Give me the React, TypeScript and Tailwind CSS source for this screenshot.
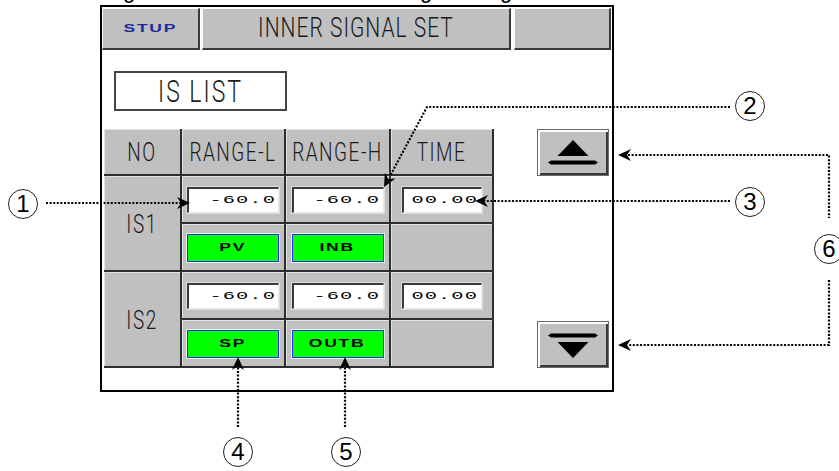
import React from "react";

type Pt = [number, number];

function arrowHead(tip: Pt, from: Pt): string {
  const dx = tip[0] - from[0];
  const dy = tip[1] - from[1];
  const len = Math.hypot(dx, dy);
  const ux = dx / len;
  const uy = dy / len;
  const px = -uy;
  const py = ux;
  const L = 13;
  const W = 6;
  const N = 9;
  const bx = tip[0] - ux * L;
  const by = tip[1] - uy * L;
  const nx = tip[0] - ux * N;
  const ny = tip[1] - uy * N;
  return `M${tip[0]} ${tip[1]} L${bx + px * W} ${by + py * W} L${nx} ${ny} L${bx - px * W} ${by - py * W} Z`;
}

function Label({ children }: { children: React.ReactNode }) {
  return (
    <span className="inline-block scale-y-[1.35] font-['Roboto','Liberation_Sans',sans-serif] font-light text-[19px] leading-none tracking-[1.5px] text-[#1a1a1a]">
      {children}
    </span>
  );
}

function NumBox({ value, w }: { value: string; w: string }) {
  return (
    <div
      className={`${w} h-[26px] bg-white border-t-2 border-l-2 border-t-[#3a3a3a] border-l-[#3a3a3a] border-r border-b border-r-[#e6e6e6] border-b-[#e6e6e6] shadow-[0_0_0_1px_#dedede] flex items-center justify-end pr-[2px]`}
    >
      <span className="inline-block origin-right scale-x-[1.85] font-['Liberation_Mono',monospace] text-[11px] leading-none tracking-[0.6px] text-black">
        {value}
      </span>
    </div>
  );
}

function GreenBtn({ label }: { label: string }) {
  return (
    <div className="w-[92px] h-[28px] bg-[#00ff00] border-[1.5px] border-[#2b2bff] shadow-[0_0_0_1px_#eeeeee] flex items-center justify-center">
      <span className="inline-block scale-x-[1.75] text-[10px] font-bold leading-none tracking-[1px] text-black">
        {label}
      </span>
    </div>
  );
}

const cell = "bg-[#c0c0c0] shadow-[inset_1px_1px_0_#e2e2e2] flex items-center justify-center pt-[2px]";

function Callout({ n, cls }: { n: string; cls: string }) {
  return (
    <div
      className={`absolute ${cls} w-[30px] h-[30px] rounded-full border border-[#222] flex items-center justify-center text-[24px] leading-none text-black`}
    >
      {n}
    </div>
  );
}

export default function App() {
  const dot = { stroke: "#000", strokeWidth: 2.2, strokeDasharray: "2 1.6", fill: "none" };
  return (
    <div className="relative w-[839px] h-[471px] overflow-hidden bg-white font-['Liberation_Sans',Arial,sans-serif] text-black">
      {/* cropped caption above */}
      <div className="relative h-[5px] overflow-hidden">
        <span className="absolute left-[123px] top-[-20px] text-[22px] leading-[22px]">g</span>
        <span className="absolute left-[420px] top-[-20px] text-[22px] leading-[22px]">g</span>
        <span className="absolute left-[500px] top-[-20px] text-[22px] leading-[22px]">g</span>
      </div>

      {/* panel */}
      <div className="ml-[100px] w-[514px] h-[387px] border-2 border-black bg-white flex flex-col">
        {/* header bar */}
        <div className="mt-[1px] flex h-[42px] gap-[2px]">
          <div className="w-[98px] bg-[#c0c0c0] border-t border-l border-t-white border-l-white border-r-2 border-b-2 border-r-[#3a3a3a] border-b-[#3a3a3a] flex items-center justify-center">
            <span className="inline-block scale-x-[1.75] text-[10px] font-bold leading-none tracking-[1px] text-[#1f2a9a]">
              STUP
            </span>
          </div>
          <div className="w-[309px] bg-[#c0c0c0] border-t border-l border-t-white border-l-white border-r-2 border-b-2 border-r-[#3a3a3a] border-b-[#3a3a3a] flex items-center justify-center">
            <span className="inline-block scale-y-[1.35] font-['Roboto','Liberation_Sans',sans-serif] font-light text-[21px] leading-none tracking-[1px] text-[#1a1a1a]">
              INNER SIGNAL SET
            </span>
          </div>
          <div className="ml-[1px] w-[97px] bg-[#c0c0c0] border-t border-l border-t-white border-l-white border-r-2 border-b-2 border-r-[#3a3a3a] border-b-[#3a3a3a]" />
        </div>

        {/* IS LIST */}
        <div className="ml-[12px] mt-[21px] w-[173px] h-[40px] border-2 border-[#444] bg-white flex items-center justify-center">
          <span className="inline-block scale-y-[1.35] font-['Roboto','Liberation_Sans',sans-serif] font-light text-[23px] leading-none tracking-[2px] text-[#1a1a1a]">
            IS LIST
          </span>
        </div>

        {/* table + scroll buttons */}
        <div className="mt-[18px] ml-[2px] flex">
          <div className="w-[390px] grid grid-cols-[76px_102px_103px_101px] grid-rows-[45px_46px_46px_46px_46px] gap-[2px] bg-[#2e2e2e] pr-[2px] pb-[2px]">
            <div className={cell}><Label>NO</Label></div>
            <div className={cell}><Label>RANGE-L</Label></div>
            <div className={cell}><Label>RANGE-H</Label></div>
            <div className={cell}><Label>TIME</Label></div>

            <div className={`${cell} row-span-2`}><Label>IS1</Label></div>
            <div className={cell}><NumBox value="-60.0" w="w-[92px]" /></div>
            <div className={cell}><NumBox value="-60.0" w="w-[92px]" /></div>
            <div className={cell}><NumBox value="00.00" w="w-[80px]" /></div>
            <div className={cell}><GreenBtn label="PV" /></div>
            <div className={cell}><GreenBtn label="INB" /></div>
            <div className={cell} />

            <div className={`${cell} row-span-2`}><Label>IS2</Label></div>
            <div className={cell}><NumBox value="-60.0" w="w-[92px]" /></div>
            <div className={cell}><NumBox value="-60.0" w="w-[92px]" /></div>
            <div className={cell}><NumBox value="00.00" w="w-[80px]" /></div>
            <div className={cell}><GreenBtn label="SP" /></div>
            <div className={cell}><GreenBtn label="OUTB" /></div>
            <div className={cell} />
          </div>

          <div className="ml-[43px] w-[72px] flex flex-col justify-between">
            <div className="h-[47px] bg-[#c0c0c0] border border-[#6a6a6a] shadow-[inset_2px_2px_0_#ffffff,inset_-2px_-2px_0_#3a3a3a] flex items-center justify-center">
              <svg width="50" height="26" viewBox="0 0 50 26">
                <path d="M25 0 L40.5 16 L9.5 16 Z" fill="#000" />
                <path d="M0 22.5 L3 20.5 L47 20.5 L50 22.5 L47 24.5 L3 24.5 Z" fill="#000" />
              </svg>
            </div>
            <div className="h-[47px] bg-[#c0c0c0] border border-[#6a6a6a] shadow-[inset_2px_2px_0_#ffffff,inset_-2px_-2px_0_#3a3a3a] flex items-center justify-center">
              <svg width="50" height="26" viewBox="0 0 50 26">
                <path d="M0 3.5 L3 1.5 L47 1.5 L50 3.5 L47 5.5 L3 5.5 Z" fill="#000" />
                <path d="M9.5 10 L40.5 10 L25 26 Z" fill="#000" />
              </svg>
            </div>
          </div>
        </div>
      </div>

      {/* annotation overlay */}
      <svg className="absolute left-0 top-0 pointer-events-none" width="839" height="471" viewBox="0 0 839 471">
        <path d="M46 203 H182" {...dot} />
        <path d={arrowHead([190, 203], [46, 203])} fill="#000" />
        <path d="M730 107 H427 L390 176" {...dot} />
        <path d={arrowHead([384, 187], [427, 107])} fill="#000" />
        <path d="M730 201 H483" {...dot} />
        <path d={arrowHead([475, 201], [730, 201])} fill="#000" />
        <path d="M628 155 H829 V218" {...dot} />
        <path d={arrowHead([618, 155], [829, 155])} fill="#000" />
        <path d="M829 280 V345 H628" {...dot} />
        <path d={arrowHead([618, 345], [829, 345])} fill="#000" />
        <path d="M238 427 V366" {...dot} />
        <path d={arrowHead([238, 357], [238, 427])} fill="#000" />
        <path d="M345 427 V366" {...dot} />
        <path d={arrowHead([345, 357], [345, 427])} fill="#000" />
      </svg>

      <Callout n="1" cls="left-[8px] top-[189px]" />
      <Callout n="2" cls="left-[735px] top-[91px]" />
      <Callout n="3" cls="left-[735px] top-[187px]" />
      <Callout n="6" cls="left-[814px] top-[234px]" />
      <Callout n="4" cls="left-[223px] top-[437px]" />
      <Callout n="5" cls="left-[331px] top-[437px]" />
    </div>
  );
}
